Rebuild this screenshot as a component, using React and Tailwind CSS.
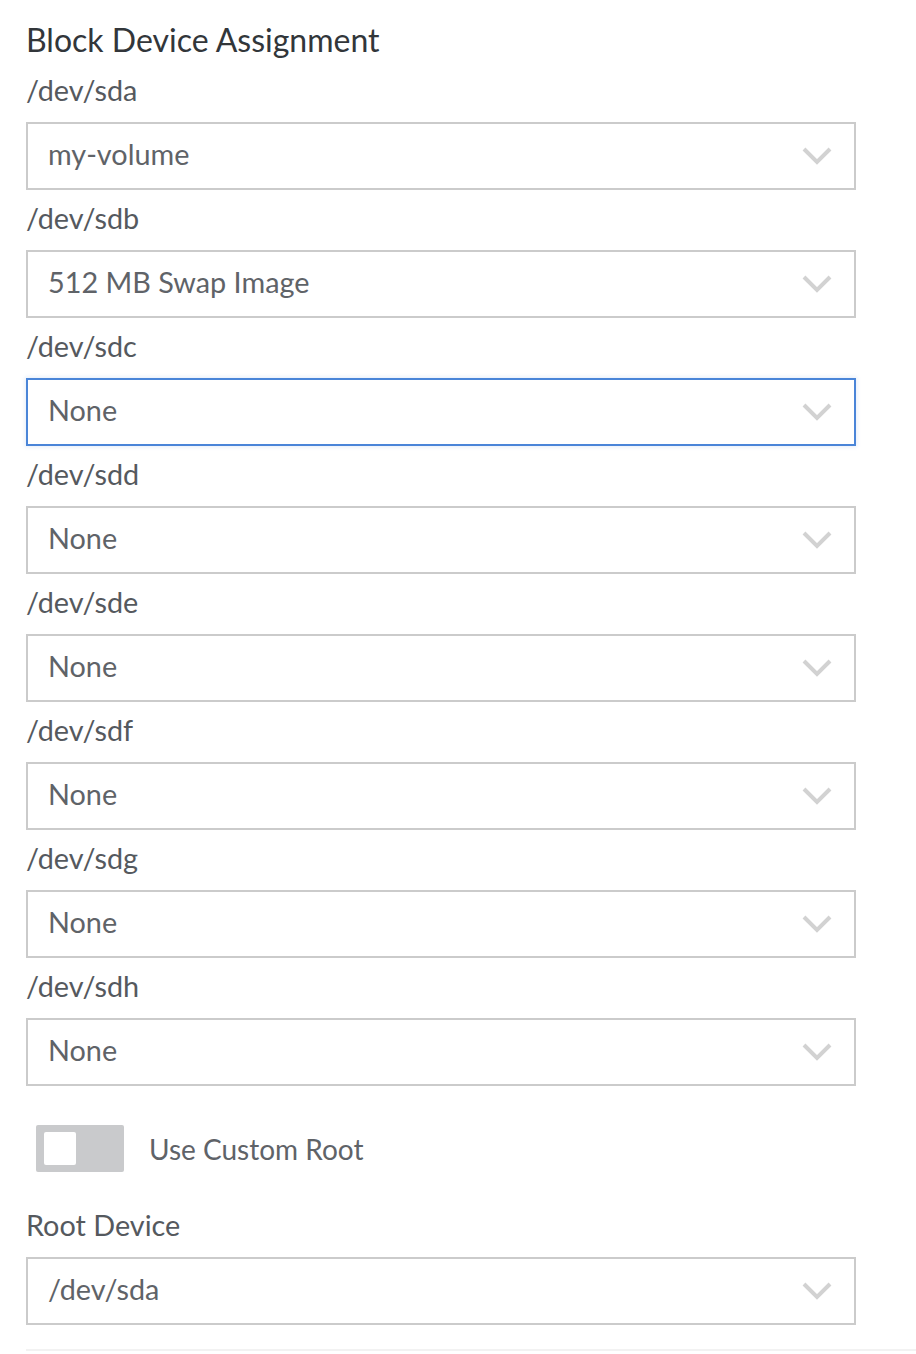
import React from "react";

const Chevron = () => (
  <svg width="30" height="18" viewBox="0 0 30 18" className="shrink-0">
    <polyline points="2,2 15,15 28,2" fill="none" stroke="#d2d2d2" strokeWidth="4" />
  </svg>
);

const Select = ({ value, focused }) => (
  <div
    className={
      "flex h-[68px] w-[830px] items-center justify-between bg-white pl-[20px] pr-[22px] border-2 " +
      (focused
        ? "border-[#4a85d8] shadow-[0_0_4px_1px_rgba(74,133,216,0.15)]"
        : "border-[#cbcbcb]")
    }
  >
    <span className="text-[28.8px] leading-none text-[#5f6368] -translate-y-[2px]">{value}</span>
    <Chevron />
  </div>
);

const Field = ({ label, value, focused }) => (
  <div className="flex flex-col">
    <div className="h-[36px] mb-[12px] flex items-center text-[28.8px] text-[#55595e] leading-none">
      <span className="-translate-y-[2px]">{label}</span>
    </div>
    <Select value={value} focused={focused} />
  </div>
);

export default function App() {
  const devs = [
    ["/dev/sda", "my-volume"],
    ["/dev/sdb", "512 MB Swap Image"],
    ["/dev/sdc", "None", true],
    ["/dev/sdd", "None"],
    ["/dev/sde", "None"],
    ["/dev/sdf", "None"],
    ["/dev/sdg", "None"],
    ["/dev/sdh", "None"],
  ];
  return (
    <div className="min-h-[1354px] w-[916px] bg-white" style={{ fontFamily: "Lato, 'Open Sans', sans-serif" }}>
      <div className="pl-[26px] pt-[20px]">
        <div className="h-[40px] flex items-center text-[32px] text-[#32363a] leading-none">Block Device Assignment</div>
        <div className="mt-[14px] flex flex-col gap-[12px]">
          {devs.map(([l, v, f]) => (
            <Field key={l} label={l} value={v} focused={f} />
          ))}
        </div>
        <div className="mt-[39px] flex items-center pl-[10px]">
          <div className="h-[47px] w-[88px] rounded-[2px] bg-[#c9cacc] flex items-center pl-[8px]">
            <div className="h-[33px] w-[32px] rounded-[2px] bg-white" />
          </div>
          <span className="ml-[25px] text-[28px] text-[#5f6368] leading-none">Use Custom Root</span>
        </div>
        <div className="mt-[37px]">
          <Field label="Root Device" value="/dev/sda" />
        </div>
        <div className="mt-[24px] h-[2px] bg-[#f2f2f2]" />
      </div>
    </div>
  );
}
